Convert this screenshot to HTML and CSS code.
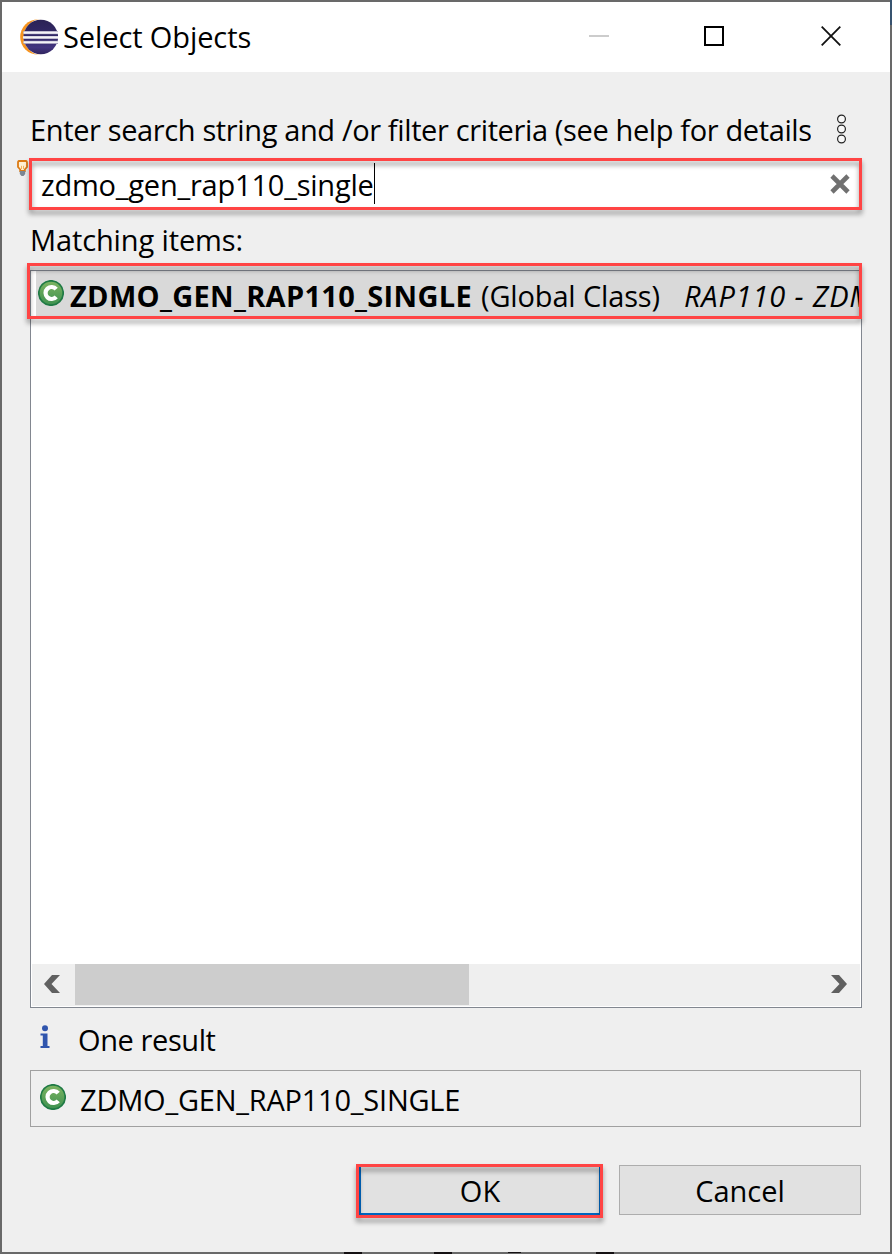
FILE: index.html
```html
<!DOCTYPE html>
<html lang="en">
<head>
<meta charset="utf-8">
<title>Select Objects</title>
<link rel="stylesheet" href="styles.css">
</head>
<body>
<svg class="defs" width="0" height="0" aria-hidden="true">
  <defs>
    <linearGradient id="green" x1="0" y1="0" x2="0" y2="1"><stop offset="0" stop-color="#7fb561"/><stop offset="1" stop-color="#3d9150"/></linearGradient>
    <linearGradient id="navy" x1="0" y1="0" x2="0" y2="1"><stop offset="0" stop-color="#2b2255"/><stop offset="0.5" stop-color="#33296a"/><stop offset="0.8" stop-color="#43357f"/><stop offset="1" stop-color="#30265f"/></linearGradient>
    <symbol id="class-icon" viewBox="0 0 26 26">
      <circle cx="13" cy="13" r="12.2" fill="url(#green)" stroke="#1f7a45" stroke-width="1.7"/>
      <path d="M18.200 9.200A6 6 0 1 0 18.200 16.800" fill="none" stroke="#fff" stroke-width="4.2"/>
    </symbol>
  </defs>
</svg>
<div class="window">
  <header class="titlebar">
    <svg class="logo" width="38" height="36" viewBox="0 0 38 36">
      <circle cx="17.8" cy="18" r="17.6" fill="#f7941e"/>
      <circle cx="21.8" cy="18" r="18" fill="#fff"/>
      <circle cx="20.8" cy="18" r="17.3" fill="url(#navy)"/>
      <path d="M3.5 13.7H38M3 18.5H38M3.5 23.3H38" stroke="#8c85aa" stroke-width="3.2"/>
      <path d="M3.5 13.6H38M3 18.4H38M3.5 23.2H38" stroke="#f4f3f8" stroke-width="2.1"/>
    </svg>
    <h1 class="title text">Select Objects</h1>
    <div class="controls">
      <svg class="minimize" width="20" height="20"><path d="M0 10H20" stroke="#ccc" stroke-width="2"/></svg>
      <svg width="20" height="20"><path d="M1 1H19V19H1Z" fill="none" stroke="#000" stroke-width="2"/></svg>
      <svg width="20" height="20"><path d="M.7.7L19.3 19.3M19.3.7L.7 19.3" stroke="#111" stroke-width="1.8"/></svg>
    </div>
  </header>
  <main class="content">
    <div class="prompt">
      <label class="prompt-label text">Enter search string and /or filter criteria (see help for details)</label>
      <svg class="menu" width="11" height="30" fill="#f8f8f8" stroke="#222" stroke-width="1.2"><circle cx="5.5" cy="5" r="3.9"/><circle cx="5.5" cy="15" r="3.9"/><circle cx="5.5" cy="25" r="3.9"/></svg>
    </div>
    <div class="search">
      <svg class="bulb" width="11" height="17" viewBox="0 0 11 17"><path d="M2 1H9Q10 1 10 3V7L7.8 9.5V11H3.2V9.5L1 7V3Q1 1 2 1Z" fill="#fff0d2" stroke="#dc7a14" stroke-width="1.8"/><path d="M4.5 9V5.8M6.5 9V5.8" stroke="#f1b35e"/><path d="M2.8 11H8.2V14L6.5 16H4.5L2.8 14Z" fill="#7c8793"/></svg>
      <span class="query text">zdmo_gen_rap110_single</span><i class="caret"></i>
      <svg class="clear" width="20" height="20"><path d="M2 2L18 18M18 2L2 18" stroke="#707070" stroke-width="4.6"/></svg>
    </div>
    <div class="list-label text">Matching items:</div>
    <div class="list">
      <div class="row">
        <svg class="badge" width="26" height="26"><use href="#class-icon"/></svg>
        <span class="name text">ZDMO_GEN_RAP110_SINGLE</span>
        <span class="kind text">(Global Class)</span>
        <span class="package text">RAP110 - ZDM</span>
      </div>
      <div class="scrollbar">
        <svg class="arrow" width="16" height="18"><path d="M8 0H16L7.5 9L16 18H8L0 9Z" fill="#606060"/></svg>
        <div class="thumb"></div>
        <svg class="arrow" width="16" height="18"><path d="M8 0H0L8.500 9L0 18H8L16 9Z" fill="#606060"/></svg>
      </div>
    </div>
    <div class="status">
      <svg class="info" width="10" height="24"><circle cx="5" cy="3.2" r="3" fill="#3055ad"/><path d="M.5 8.500H7.500V21H9.500V23H.5V21H2.800V10.500H.5Z" fill="#3055ad"/></svg>
      <span class="result text">One result</span>
    </div>
    <div class="selection">
      <svg width="26" height="26"><use href="#class-icon"/></svg>
      <span class="selected text">ZDMO_GEN_RAP110_SINGLE</span>
    </div>
    <footer class="actions">
      <button class="button ok"><span class="ok-label text">OK</span></button>
      <button class="button cancel"><span class="cancel-label text">Cancel</span></button>
    </footer>
  </main>
</div>
</body>
</html>
```
FILE: styles.css
```css
* { box-sizing: border-box; }
body { margin: 0; height: 1254px; overflow: hidden; font-family: "Open Sans", "Noto Sans", sans-serif; font-size: 29px; line-height: 40px; color: #000; }
.defs { position: absolute; }
svg { display: block; flex: none; }
.text { white-space: pre; flex: none; }
.window {
  width: 892px; height: 1254px; padding: 2px; display: flex; flex-direction: column;
  background:
    linear-gradient(#141012, #141012) 344px 1252px / 18px 2px no-repeat,
    linear-gradient(#141012, #141012) 434px 1252px / 18px 2px no-repeat,
    linear-gradient(#141012, #141012) 508px 1252px / 13px 1px no-repeat,
    linear-gradient(#141012, #141012) 596px 1252px / 18px 2px no-repeat,
    linear-gradient(#38536f, #38536f) 890px 0 / 2px 25px no-repeat,
    #696969;
}
.titlebar { height: 70px; flex: none; display: flex; align-items: center; padding: 0 49px 0 18px; background: #fff; }
.logo { margin-right: 5px; }
.title { margin: 0; font-size: 29px; font-weight: 400; letter-spacing: -0.1px; }
.controls { margin: -2px 0 0 auto; display: flex; gap: 97px; }
.minimize { margin-right: -2px; }
.content { flex: 1; background: #efefef; padding: 38px 29px 0 28px; display: flex; flex-direction: column; }
.prompt { height: 40px; display: flex; align-items: center; justify-content: space-between; padding-right: 14px; }
.prompt-label { width: 781px; overflow: hidden; letter-spacing: -0.37px; }
.menu { margin-top: -2px; }
.search { position: relative; margin-top: 10px; height: 48px; background: #fff; display: flex; align-items: center; padding: 2px 11px 0 11px; }
.search::after, .row::before, .ok::after { content: ""; position: absolute; border: 3px solid #ff4444; filter: drop-shadow(0 4px 2.5px rgba(0, 0, 0, .42)); pointer-events: none; }
.search::after { inset: -2px -1px -2px -1px; }
.bulb { position: absolute; left: -13px; top: 0; }
.query { letter-spacing: -0.21px; }
.caret { width: 1px; height: 41px; margin-top: -3px; background: #000; }
.clear { margin-left: auto; margin-top: -2px; }
.list-label { margin-top: 12px; letter-spacing: -0.12px; }
.list { margin-top: 10px; width: 832px; height: 738px; background: #fff; border: 1px solid #828790; display: flex; flex-direction: column; }
.row { position: relative; height: 47px; display: flex; align-items: center; padding-left: 7px; padding-top: 2px; background: linear-gradient(90deg, #fff 5px, #d9d9d9 5px); }
.row::before { left: -4px; right: -1px; top: -8px; bottom: -1px; z-index: 1; }
.badge { margin-top: -5px; }
.name { font-weight: 700; margin-left: 6px; letter-spacing: 0.31px; }
.kind { margin-left: 9px; letter-spacing: -0.15px; }
.package { flex: 0 0 176px; overflow: hidden; margin-left: 24px; font-style: italic; letter-spacing: 0.85px; }
.scrollbar { margin: auto 1px 1px; height: 42px; padding: 0 13px 0 12px; background: #efefef; display: flex; align-items: center; }
.thumb { width: 394px; height: 41px; margin: 0 auto 1px 15px; background: #cdcdcd; }
.arrow { margin-top: -2px; }
.status { margin-top: 12px; height: 40px; display: flex; align-items: center; padding-left: 10px; }
.info { margin-top: -6px; }
.result { margin-left: 28px; letter-spacing: -0.4px; }
.selection { margin-top: 10px; height: 57px; border: 1px solid #a0a0a0; display: flex; align-items: center; padding-left: 9px; }
.selection svg { margin-top: -3px; }
.selected { margin: 2px 0 0 14px; letter-spacing: -0.22px; }
.actions { margin-top: 38px; display: flex; justify-content: flex-end; gap: 18px; }
.button { font: inherit; position: relative; width: 242px; height: 50px; padding: 2px 0 0; border: 1px solid #adadad; background: #e1e1e1; display: flex; align-items: center; justify-content: center; color: #000; }
.ok { border: 2px solid #0067c0; }
.ok::after { inset: -3px -4px -5px -5px; }
```
